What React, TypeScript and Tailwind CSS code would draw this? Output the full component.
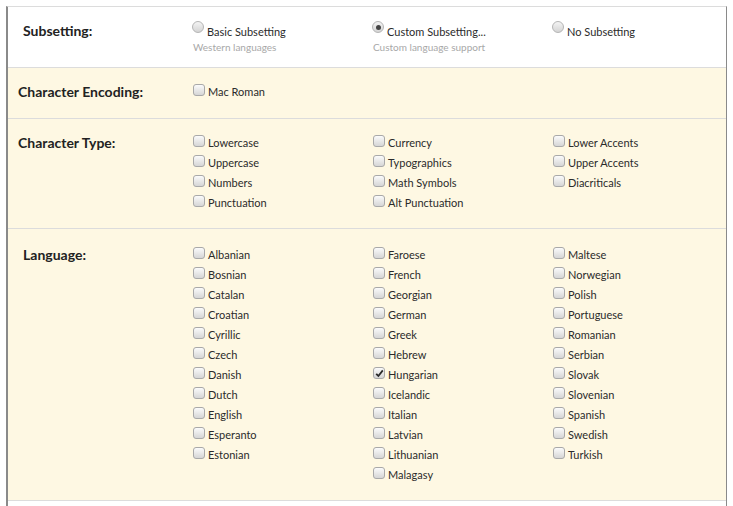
import type { ReactNode } from "react";

const charTypes = [
  ["Lowercase", "Uppercase", "Numbers", "Punctuation"],
  ["Currency", "Typographics", "Math Symbols", "Alt Punctuation"],
  ["Lower Accents", "Upper Accents", "Diacriticals"],
];

const languages = [
  ["Albanian", "Bosnian", "Catalan", "Croatian", "Cyrillic", "Czech", "Danish", "Dutch", "English", "Esperanto", "Estonian"],
  ["Faroese", "French", "Georgian", "German", "Greek", "Hebrew", "Hungarian", "Icelandic", "Italian", "Latvian", "Lithuanian", "Malagasy"],
  ["Maltese", "Norwegian", "Polish", "Portuguese", "Romanian", "Serbian", "Slovak", "Slovenian", "Spanish", "Swedish", "Turkish"],
];

function Box({ checked }: { checked?: boolean }) {
  return (
    <span className="mt-[2px] flex h-[12px] w-[12px] shrink-0 items-center justify-center rounded-[3px] border border-[#a9a9a9] bg-gradient-to-b from-[#fbfbfb] to-[#d6d6d6]">
      {checked && (
        <svg width="9" height="9" viewBox="0 0 9 9">
          <path d="M1.2 4.8 L3.4 7 L7.8 1.4" fill="none" stroke="#2a2a2a" strokeWidth="1.8" />
        </svg>
      )}
    </span>
  );
}

function Check({ label, checked }: { label: string; checked?: boolean }) {
  return (
    <label className="flex h-5 items-start gap-[3px] leading-5">
      <Box checked={checked} />
      <span className="leading-5">{label}</span>
    </label>
  );
}

function Radio({ label, sub, checked }: { label: string; sub?: string; checked?: boolean }) {
  return (
    <div className="ml-[-1px]">
      <div className="flex h-5 items-start gap-[3px]">
        <span className="flex h-[12px] w-[12px] items-center justify-center rounded-full border border-[#b5b5b5] bg-gradient-to-b from-[#f4f4f4] to-[#d4d4d4]">
          {checked && <span className="h-[5px] w-[5px] rounded-full bg-[#444]" />}
        </span>
        <span className="mt-[1px] leading-5">{label}</span>
      </div>
      {sub && <div className="ml-[1px] text-[10px] leading-3 text-[#a8a8a8]">{sub}</div>}
    </div>
  );
}

function Row({ label, indent, white, pt, children }: { label: string; indent?: boolean; white?: boolean; pt: string; children: ReactNode }) {
  return (
    <div className={`flex border-b border-[#dcdcdc] ${white ? "bg-white" : "bg-[#fef8e3]"} ${pt}`}>
      <div className={`w-[185px] shrink-0 text-[14px] font-bold leading-5 text-[#222] ${indent ? "pl-[15px]" : "pl-[10px]"}`}>{label}</div>
      <div className="flex-1">{children}</div>
    </div>
  );
}

export default function App() {
  return (
    <div className="h-[506px] overflow-hidden bg-white pt-[6px] text-[11px] text-[#2b2b2b]" style={{ fontFamily: "Lato, 'Open Sans', sans-serif" }}>
      <div className="ml-[6px] w-[721px] border-l-2 border-r border-t border-l-[#8a8a8a] border-r-[#8a8a8a] border-t-[#dcdcdc]">
        <Row label="Subsetting:" indent white pt="pt-[14px] pb-[14px]">
          <div className="grid grid-cols-[180px_180px_1fr]">
            <Radio label="Basic Subsetting" sub="Western languages" />
            <Radio label="Custom Subsetting..." sub="Custom language support" checked />
            <Radio label="No Subsetting" />
          </div>
        </Row>
        <Row label="Character Encoding:" pt="pt-[14px] pb-[16px]">
          <Check label="Mac Roman" />
        </Row>
        <Row label="Character Type:" pt="pt-[14px] pb-[15px]">
          <div className="grid grid-cols-[180px_180px_1fr]">
            {charTypes.map((col, i) => (
              <div key={i}>
                {col.map((t) => (
                  <Check key={t} label={t} />
                ))}
              </div>
            ))}
          </div>
        </Row>
        <Row label="Language:" indent pt="pt-[16px] pb-[15px]">
          <div className="grid grid-cols-[180px_180px_1fr]">
            {languages.map((col, i) => (
              <div key={i}>
                {col.map((t) => (
                  <Check key={t} label={t} checked={t === "Hungarian"} />
                ))}
              </div>
            ))}
          </div>
        </Row>
        <div className="h-[20px] bg-white" />
      </div>
    </div>
  );
}
